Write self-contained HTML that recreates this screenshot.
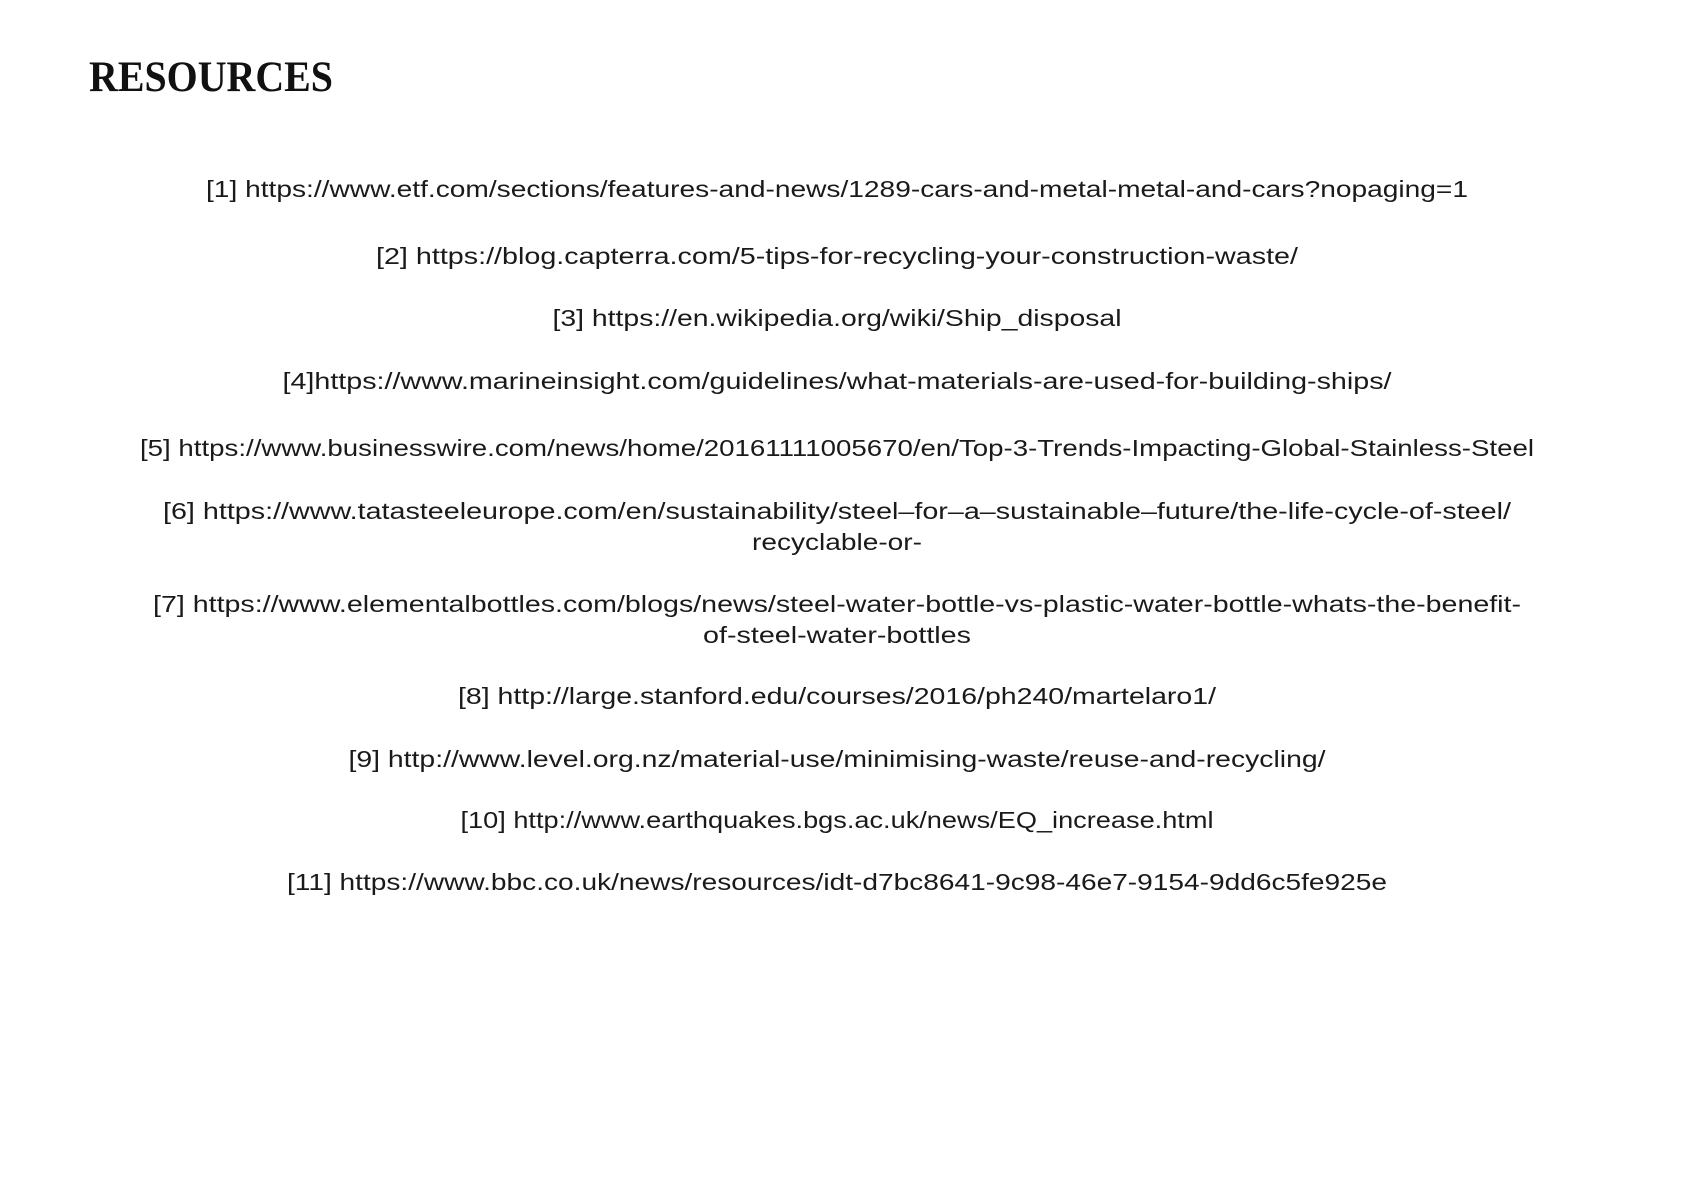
<!DOCTYPE html>
<html><head><meta charset="utf-8"><style>
html,body{margin:0;padding:0;background:#fff;width:1700px;height:1203px;overflow:hidden}
svg{display:block}
text{font-family:"Liberation Sans",sans-serif;font-size:23px;fill:#1a1a1a}
.t{font-family:"Liberation Serif",serif;font-size:43px;font-weight:bold;fill:#111}
</style></head><body>
<svg width="1700" height="1203" viewBox="0 0 1700 1203">
<text class="t" x="89" y="91" textLength="244" lengthAdjust="spacingAndGlyphs">RESOURCES</text>
<g text-anchor="middle">
<text x="837" y="197" textLength="1262" lengthAdjust="spacingAndGlyphs">[1] https://www.etf.com/sections/features-and-news/1289-cars-and-metal-metal-and-cars?nopaging=1</text>
<text x="837" y="264" textLength="922" lengthAdjust="spacingAndGlyphs">[2] https://blog.capterra.com/5-tips-for-recycling-your-construction-waste/</text>
<text x="837" y="326" textLength="569" lengthAdjust="spacingAndGlyphs">[3] https://en.wikipedia.org/wiki/Ship_disposal</text>
<text x="837" y="389" textLength="1109" lengthAdjust="spacingAndGlyphs">[4]https://www.marineinsight.com/guidelines/what-materials-are-used-for-building-ships/</text>
<text x="837" y="456" textLength="1394" lengthAdjust="spacingAndGlyphs">[5] https://www.businesswire.com/news/home/20161111005670/en/Top-3-Trends-Impacting-Global-Stainless-Steel</text>
<text x="837" y="519" textLength="1348" lengthAdjust="spacingAndGlyphs">[6] https://www.tatasteeleurope.com/en/sustainability/steel–for–a–sustainable–future/the-life-cycle-of-steel/</text>
<text x="837" y="550" textLength="170" lengthAdjust="spacingAndGlyphs">recyclable-or-</text>
<text x="837" y="612" textLength="1368" lengthAdjust="spacingAndGlyphs">[7] https://www.elementalbottles.com/blogs/news/steel-water-bottle-vs-plastic-water-bottle-whats-the-benefit-</text>
<text x="837" y="643" textLength="268" lengthAdjust="spacingAndGlyphs">of-steel-water-bottles</text>
<text x="837" y="704" textLength="758" lengthAdjust="spacingAndGlyphs">[8] http://large.stanford.edu/courses/2016/ph240/martelaro1/</text>
<text x="837" y="767" textLength="977" lengthAdjust="spacingAndGlyphs">[9] http://www.level.org.nz/material-use/minimising-waste/reuse-and-recycling/</text>
<text x="837" y="828" textLength="753" lengthAdjust="spacingAndGlyphs">[10] http://www.earthquakes.bgs.ac.uk/news/EQ_increase.html</text>
<text x="837" y="890" textLength="1100" lengthAdjust="spacingAndGlyphs">[11] https://www.bbc.co.uk/news/resources/idt-d7bc8641-9c98-46e7-9154-9dd6c5fe925e</text>
</g>
</svg>
</body></html>
